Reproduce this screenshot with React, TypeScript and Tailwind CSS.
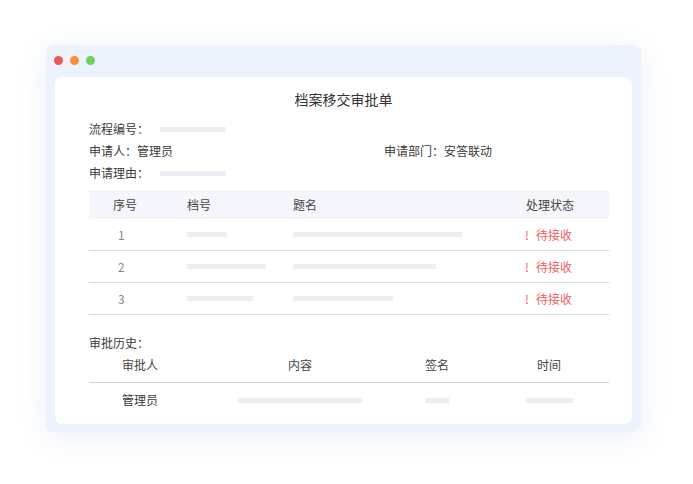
const items = [
  { no: "1", code: 40, title: 169 },
  { no: "2", code: 79, title: 143 },
  { no: "3", code: 66, title: 100 },
];

function Bar({ w }: { w: number }) {
  return <span className="inline-block h-[5px] bg-[#ebeff4]" style={{ width: w }} />;
}

export default function App() {
  return (
    <div
      className="h-[484px] w-[693px] bg-white pl-[46px] pt-[45px] text-[12px] text-[#3a3a3a]"
      style={{ fontFamily: '"Noto Sans CJK SC", "Noto Sans", sans-serif' }}
    >
      <div className="flex h-[387px] w-[595px] flex-col rounded-[7px] bg-[#ecf3fd] px-[9px] pb-[8px] shadow-[0_6px_30px_rgba(90,120,170,0.12)]">
        <div className="-ml-[1px] flex h-[32px] items-center gap-[7px] pb-[1px]">
          <span className="h-[9px] w-[9px] rounded-full bg-[#ee5757]" />
          <span className="h-[9px] w-[9px] rounded-full bg-[#fb8f37]" />
          <span className="h-[9px] w-[9px] rounded-full bg-[#6cd05f]" />
        </div>

        <div className="flex-1 rounded-[8px] bg-white pl-[34px] pr-[23px] pt-[12px]">
          <h1 className="-ml-[34px] -mr-[23px] text-center text-[14px] leading-[20px] text-[#333]">
            档案移交审批单
          </h1>

          <div className="mt-[9px]">
            <div className="flex h-[22px] items-center">
              <span className="w-[71px]">流程编号：</span>
              <Bar w={66} />
            </div>
            <div className="grid h-[22px] grid-cols-[295px_1fr] items-center">
              <span>申请人：管理员</span>
              <span>申请部门：安答联动</span>
            </div>
            <div className="flex h-[22px] items-center">
              <span className="w-[71px]">申请理由：</span>
              <Bar w={66} />
            </div>
          </div>

          <div className="mt-[6px] w-[520px]">
            <div className="grid h-[29px] grid-cols-[98px_106px_232px_1fr] items-center bg-[#f4f6fc] text-[#444]">
              <span className="pl-[24px]">序号</span>
              <span>档号</span>
              <span>题名</span>
              <span className="pl-[1px]">处理状态</span>
            </div>
            {items.map((r) => (
              <div
                key={r.no}
                className="grid h-[32px] grid-cols-[98px_106px_232px_1fr] items-center border-b border-[#d9d9d9]"
              >
                <span className="pl-[29px] text-[#888]">{r.no}</span>
                <span className="flex">
                  <Bar w={r.code} />
                </span>
                <span className="flex">
                  <Bar w={r.title} />
                </span>
                <span className="flex items-center text-[#f06060]">
                  <span className="w-[11px]">!</span>
                  <span>待接收</span>
                </span>
              </div>
            ))}
          </div>

          <div className="mt-[17px] leading-[22px]">审批历史：</div>
          <div className="w-[520px]">
            <div className="grid grid-cols-[102px_218px_56px_1fr] border-b border-[#d0d0d0] pb-[6px] text-center leading-[22px] text-[#444]">
              <span>审批人</span>
              <span>内容</span>
              <span>签名</span>
              <span className="pl-[24px]">时间</span>
            </div>
            <div className="grid h-[34px] grid-cols-[102px_218px_56px_1fr] items-center text-center">
              <span>管理员</span>
              <span className="flex justify-center">
                <Bar w={124} />
              </span>
              <span className="flex justify-center">
                <Bar w={24} />
              </span>
              <span className="flex justify-center pl-[24px]">
                <Bar w={47} />
              </span>
            </div>
          </div>
        </div>
      </div>
    </div>
  );
}
